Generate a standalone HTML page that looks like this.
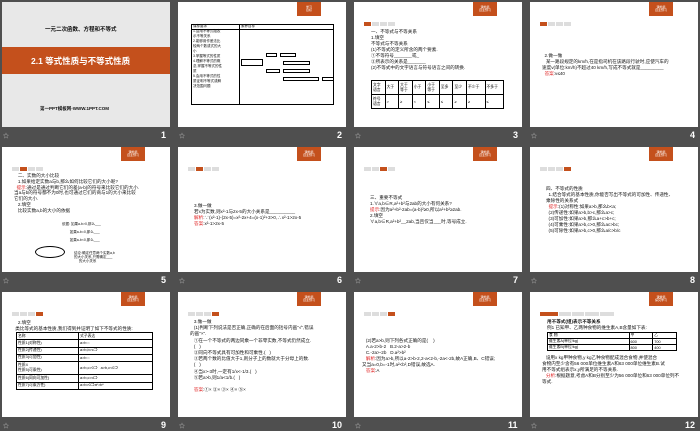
<!DOCTYPE html>
<html><head><meta charset="utf-8"><style>
*{margin:0;padding:0;box-sizing:border-box}
body{width:700px;height:431px;background:#4f4f4f;position:relative;overflow:hidden;font-family:"Liberation Sans","Noto Sans CJK SC",sans-serif}
.s{position:absolute;width:168px;height:125px;background:#fff;overflow:hidden}
.b{position:absolute;left:119px;top:0;width:24px;height:14px;background:#c4501c;color:#fff;font-size:3px;text-align:center;padding-top:4px;line-height:3px}
.tabs{position:absolute;left:10px;top:20px;display:flex;gap:1px}
.tabs i{display:block;width:7px;height:4px;background:#ddd}
.tabs i.o{background:#c4501c}
.t{position:absolute;font-size:4.6px;line-height:6px;color:#111;white-space:nowrap}
.r{color:#e02020}
.n{position:absolute;color:#fff;font-size:9px;font-weight:bold}
.st{position:absolute;color:#ccc;font-size:6px}
table{border-collapse:collapse;position:absolute;font-size:3.8px}
td{border:0.6px solid #000;padding:0 1px;height:5px}
</style></head><body>

<div class="s" style="left:2px;top:2px;background:#e8e8e8">
<div class="t" style="left:43px;top:25px;font-size:5.5px;font-weight:bold">一元二次函数、方程和不等式</div>
<div style="position:absolute;left:0;top:45px;width:168px;height:27px;background:#c4501c"></div>
<div class="t" style="left:29px;top:55px;font-size:8.5px;line-height:9px;font-weight:bold;color:#fff">2.1 等式性质与不等式性质</div>
<div class="t" style="left:38px;top:104px;font-size:4.5px;font-weight:bold">第一PPT模板网-WWW.1PPT.COM</div>
</div>

<div class="s" style="left:178px;top:2px"><div class="b">学习<br>目标</div>
<div style="position:absolute;left:13px;top:22px;width:143px;height:81px;border:1px solid #000"></div>
<div style="position:absolute;left:13px;top:27px;width:143px;border-top:0.6px solid #000"></div>
<div style="position:absolute;left:61px;top:22px;height:81px;border-left:0.6px solid #000"></div>
<div class="t" style="left:15px;top:22px;font-size:3.5px;line-height:5px">课标要求<br>1.会用不等式组表<br>示不等关系<br>2.能够用作差法比<br>较两个数或式的大<br>小<br>3.掌握等式的性质<br>4.理解不等式的概<br>念,掌握不等式的性<br>质<br>5.会用不等式的性<br>质证明不等式或解<br>决范围问题</div>
<div class="t" style="left:63px;top:22px;font-size:3.5px;line-height:5px">素养目标</div>
<div style="position:absolute;left:63px;top:57px;width:22px;height:7px;border:0.5px solid #000"></div>
<div style="position:absolute;left:88px;top:51px;width:11px;height:4px;border:0.5px solid #000"></div>
<div style="position:absolute;left:102px;top:51px;width:16px;height:4px;border:0.5px solid #000"></div>
<div style="position:absolute;left:88px;top:67px;width:14px;height:4px;border:0.5px solid #000"></div>
<div style="position:absolute;left:105px;top:59px;width:27px;height:4px;border:0.5px solid #000"></div>
<div style="position:absolute;left:105px;top:67px;width:27px;height:4px;border:0.5px solid #000"></div>
<div style="position:absolute;left:105px;top:75px;width:36px;height:4px;border:0.5px solid #000"></div>
<div style="position:absolute;left:144px;top:75px;width:12px;height:4px;border:0.5px solid #000"></div>
</div>

<div class="s" style="left:354px;top:2px"><div class="b">课前篇<br>自主预习</div>
<div class="tabs"><i class="o"></i><i></i><i></i><i></i></div>
<div class="t" style="left:17px;top:27px">一、不等式与不等关系<br>1.填空<br>不等式与不等关系<br>(1)不等式的定义所含的两个要素.<br>①不等符号_______或_<br>②所表示的关系是_______<br>(2)不等式中的文字语言与符号语言之间的转换.</div>
<table style="left:17px;top:78px;width:133px;height:29px;border:1px solid #000"><tr><td>文字<br>语言</td><td>大于</td><td>大于<br>等于</td><td>小于</td><td>小于<br>等于</td><td>至多</td><td>至少</td><td>不少于</td><td>不多于</td></tr><tr><td>符号<br>语言</td><td>&gt;</td><td>≥</td><td>&lt;</td><td>≤</td><td>≤</td><td>≥</td><td>≥</td><td>≤</td></tr></table>
</div>

<div class="s" style="left:530px;top:2px"><div class="b">课前篇<br>自主预习</div>
<div class="tabs"><i class="o"></i><i></i><i></i><i></i></div>
<div class="t" style="left:12px;top:51px">&nbsp;&nbsp;2.做一做<br>&nbsp;&nbsp;&nbsp;某一路段规定的km/h,在是指司机在该路段行驶时,应使汽车的<br>速度v(单位:km/h)不超过40 km/h,写成不等式就是_________<br>&nbsp;&nbsp;<span class="r">答案</span>:v≤40</div>
</div>

<div class="s" style="left:2px;top:147px"><div class="b">课前篇<br>自主预习</div>
<div class="tabs"><i></i><i class="o"></i><i></i><i></i></div>
<div class="t" style="left:12px;top:26px;line-height:5.8px">&nbsp;&nbsp;&nbsp;二、实数的大小比较<br>&nbsp;&nbsp;&nbsp;1.如果给定实数a与b,那么如何比较它们的大小呢?<br>&nbsp;&nbsp;<span class="r">提示</span>:通过是通过判断它们的差(a-b)的符号来比较它们的大小.<br>当a与b的符号都不为0时,也可通过它们的商与1的大小来比较<br>它们的大小.<br>&nbsp;&nbsp;&nbsp;2.填空<br>&nbsp;&nbsp;&nbsp;比较实数a,b的大小的依据</div>
<div style="position:absolute;left:33px;top:99px;width:30px;height:12px;border:0.6px solid #000;border-radius:50%"></div>
<div class="t" style="left:60px;top:73px;font-size:3.5px;line-height:8px">依据: 如果a-b&gt;0,那么___<br>&nbsp;&nbsp;&nbsp;&nbsp;&nbsp;&nbsp;&nbsp;&nbsp;如果a-b=0,那么___<br>&nbsp;&nbsp;&nbsp;&nbsp;&nbsp;&nbsp;&nbsp;&nbsp;如果a-b&lt;0,那么___</div>
<div class="t" style="left:72px;top:104px;font-size:3.5px;line-height:4px">结论:确定任意两个实数a,b<br>的大小关系,只需确定___<br>&nbsp;&nbsp;&nbsp;&nbsp;&nbsp;的大小关系</div>
</div>

<div class="s" style="left:178px;top:147px"><div class="b">课前篇<br>自主预习</div>
<div class="tabs"><i></i><i class="o"></i><i></i><i></i></div>
<div class="t" style="left:16px;top:56px">3.做一做<br>若x为实数,则x²-1与2x-5的大小关系是__________<br><span class="r">解析</span>:∵(x²-1)-(2x-5)=x²-2x+4=(x-1)²+3&gt;0,∴x²-1&gt;2x-5<br><span class="r">答案</span>:x²-1&gt;2x-5</div>
</div>

<div class="s" style="left:354px;top:147px"><div class="b">课前篇<br>自主预习</div>
<div class="tabs"><i></i><i></i><i class="o"></i><i></i></div>
<div class="t" style="left:16px;top:48px">三、重要不等式<br>1.∀a,b∈R,a²+b²与2ab的大小有何关系?<br><span class="r">提示</span>:因为a²+b²-2ab=(a-b)²≥0,所以a²+b²≥2ab.<br>2.填空<br>∀a,b∈R,a²+b²__2ab,当且仅当___时,等号成立.</div>
</div>

<div class="s" style="left:530px;top:147px"><div class="b">课前篇<br>自主预习</div>
<div class="tabs"><i></i><i></i><i></i><i class="o"></i></div>
<div class="t" style="left:16px;top:39px">四、不等式的性质<br>&nbsp;&nbsp;1.结合等式的基本性质,你能否写出不等式的可加性、传递性、<br>乘除性的关系式<br>&nbsp;&nbsp;<span class="r">提示</span>:(1)对称性:如果a&gt;b,那么b&lt;a;<br>&nbsp;&nbsp;(2)传递性:如果a&gt;b,b&gt;c,那么a&gt;c;<br>&nbsp;&nbsp;(3)可加性:如果a&gt;b,那么a+c&gt;b+c;<br>&nbsp;&nbsp;(4)可乘性:如果a&gt;b,c&gt;0,那么ac&gt;bc;<br>&nbsp;&nbsp;(5)可除性:如果a&gt;b,c&gt;0,那么a/c&gt;b/c</div>
</div>

<div class="s" style="left:2px;top:292px"><div class="b">课前篇<br>自主预习</div>
<div class="tabs"><i></i><i></i><i></i><i class="o"></i></div>
<div class="t" style="left:12px;top:28px">&nbsp;&nbsp;&nbsp;2.填空<br>&nbsp;类比等式的基本性质,我们得到并证明了如下不等式的性质:</div>
<table style="left:14px;top:40px;width:137px;height:58px;border:1px solid #000"><tr><td style="width:62px">名称</td><td>式子表达</td></tr><tr><td>性质1(对称性)</td><td>a&gt;b⇔</td></tr><tr><td>性质2(传递性)</td><td>a&gt;b,b&gt;c⇒</td></tr><tr><td>性质3(可加性)</td><td>a&gt;b⇔</td></tr><tr><td>性质4<br>性质5(可乘性)</td><td>a&gt;b,c&gt;0⇒ &nbsp; a&gt;b,c&lt;0⇒</td></tr><tr><td>性质6(同向可加性)</td><td>a&gt;b,c&gt;d⇒</td></tr><tr><td>性质7(可乘方性)</td><td>a&gt;b&gt;0⇒aⁿ&gt;bⁿ</td></tr></table>
</div>

<div class="s" style="left:178px;top:292px"><div class="b">课前篇<br>自主预习</div>
<div class="tabs"><i></i><i></i><i></i><i class="o"></i></div>
<div class="t" style="left:12px;top:27px;line-height:6.2px">&nbsp;&nbsp;&nbsp;3.做一做<br>&nbsp;&nbsp;&nbsp;(1)判断下列说法是否正确,正确的在后面的括号内画"√",错误<br>的画"×".<br>&nbsp;&nbsp;&nbsp;①在一个不等式的两边同乘一个非零实数,不等式仍然成立.<br>&nbsp;&nbsp;&nbsp;(&nbsp;&nbsp;&nbsp;)<br>&nbsp;&nbsp;&nbsp;②同向不等式具有可加性和可乘性.(&nbsp;&nbsp;&nbsp;)<br>&nbsp;&nbsp;&nbsp;③若两个数的比值大于1,则分子上的数就大于分母上的数.<br>&nbsp;&nbsp;&nbsp;(&nbsp;&nbsp;&nbsp;)<br>&nbsp;&nbsp;&nbsp;④当x&gt;-3时,一定有1/x&lt;-1/3.(&nbsp;&nbsp;&nbsp;)<br>&nbsp;&nbsp;&nbsp;⑤若a&gt;b,则1/a&lt;1/b.(&nbsp;&nbsp;&nbsp;)<br><br>&nbsp;&nbsp;&nbsp;<span class="r">答案</span>:①× ②× ③× ④× ⑤×</div>
</div>

<div class="s" style="left:354px;top:292px"><div class="b">课前篇<br>自主预习</div>
<div class="tabs"><i></i><i></i><i></i><i class="o"></i></div>
<div class="t" style="left:8px;top:46px">&nbsp;&nbsp;&nbsp;(2)若a&gt;b,则下列各式正确的是(&nbsp;&nbsp;&nbsp;&nbsp;)<br>&nbsp;&nbsp;&nbsp;A.a-2&gt;b-2 &nbsp;&nbsp;B.2-a&gt;2-b<br>&nbsp;&nbsp;&nbsp;C.-2a&gt;-2b &nbsp;&nbsp;D.a²&gt;b²<br>&nbsp;&nbsp;&nbsp;<span class="r">解析</span>:因为a&gt;b,所以a-2&gt;b-2,2-a&lt;2-b,-2a&lt;-2b,故A正确,B、C错误;<br>又当a=0,b=-1时,a²&lt;b²,D错误,故选A.<br>&nbsp;&nbsp;&nbsp;<span class="r">答案</span>:A</div>
</div>

<div class="s" style="left:530px;top:292px"><div class="b">课堂篇<br>探究学习</div>
<div class="tabs" style="left:10px"><i class="o" style="width:18px"></i><i style="width:12px"></i><i style="width:12px"></i><i style="width:14px"></i><i style="width:14px"></i></div>
<div class="t" style="left:17px;top:27px;font-weight:bold">用不等式(组)表示不等关系</div>
<div class="t" style="left:17px;top:33px">例1 已知甲、乙两种食物的维生素A,B含量如下表:</div>
<table style="left:17px;top:40px;width:130px;height:18px;border:1px solid #000"><tr><td>食 物</td><td>甲</td><td>乙</td></tr><tr><td>维生素A(单位/kg)</td><td>600</td><td>700</td></tr><tr><td>维生素B(单位/kg)</td><td>800</td><td>400</td></tr></table>
<div class="t" style="left:12px;top:63px">&nbsp;&nbsp;&nbsp;设用x kg甲种食物,y kg乙种食物配成混合食物,并使混合<br>食物内至少含有56 000单位维生素A和63 000单位维生素B.试<br>用不等式组表示x,y所满足的不等关系.<br>&nbsp;&nbsp;&nbsp;<span class="r">分析</span>:根据题意,考虑A和B分别至少为56 000单位和63 000单位列不<br>等式.</div>
</div>

<div class="st" style="left:3px;top:131px">☆</div><div class="n" style="left:161px;top:130px">1</div>
<div class="st" style="left:179px;top:131px">☆</div><div class="n" style="left:337px;top:130px">2</div>
<div class="st" style="left:355px;top:131px">☆</div><div class="n" style="left:513px;top:130px">3</div>
<div class="st" style="left:531px;top:131px">☆</div><div class="n" style="left:690px;top:130px">4</div>
<div class="st" style="left:3px;top:276px">☆</div><div class="n" style="left:161px;top:275px">5</div>
<div class="st" style="left:179px;top:276px">☆</div><div class="n" style="left:337px;top:275px">6</div>
<div class="st" style="left:355px;top:276px">☆</div><div class="n" style="left:513px;top:275px">7</div>
<div class="st" style="left:531px;top:276px">☆</div><div class="n" style="left:690px;top:275px">8</div>
<div class="st" style="left:3px;top:421px">☆</div><div class="n" style="left:161px;top:420px">9</div>
<div class="st" style="left:179px;top:421px">☆</div><div class="n" style="left:332px;top:420px">10</div>
<div class="st" style="left:355px;top:421px">☆</div><div class="n" style="left:508px;top:420px">11</div>
<div class="st" style="left:531px;top:421px">☆</div><div class="n" style="left:685px;top:420px">12</div>
</body></html>
